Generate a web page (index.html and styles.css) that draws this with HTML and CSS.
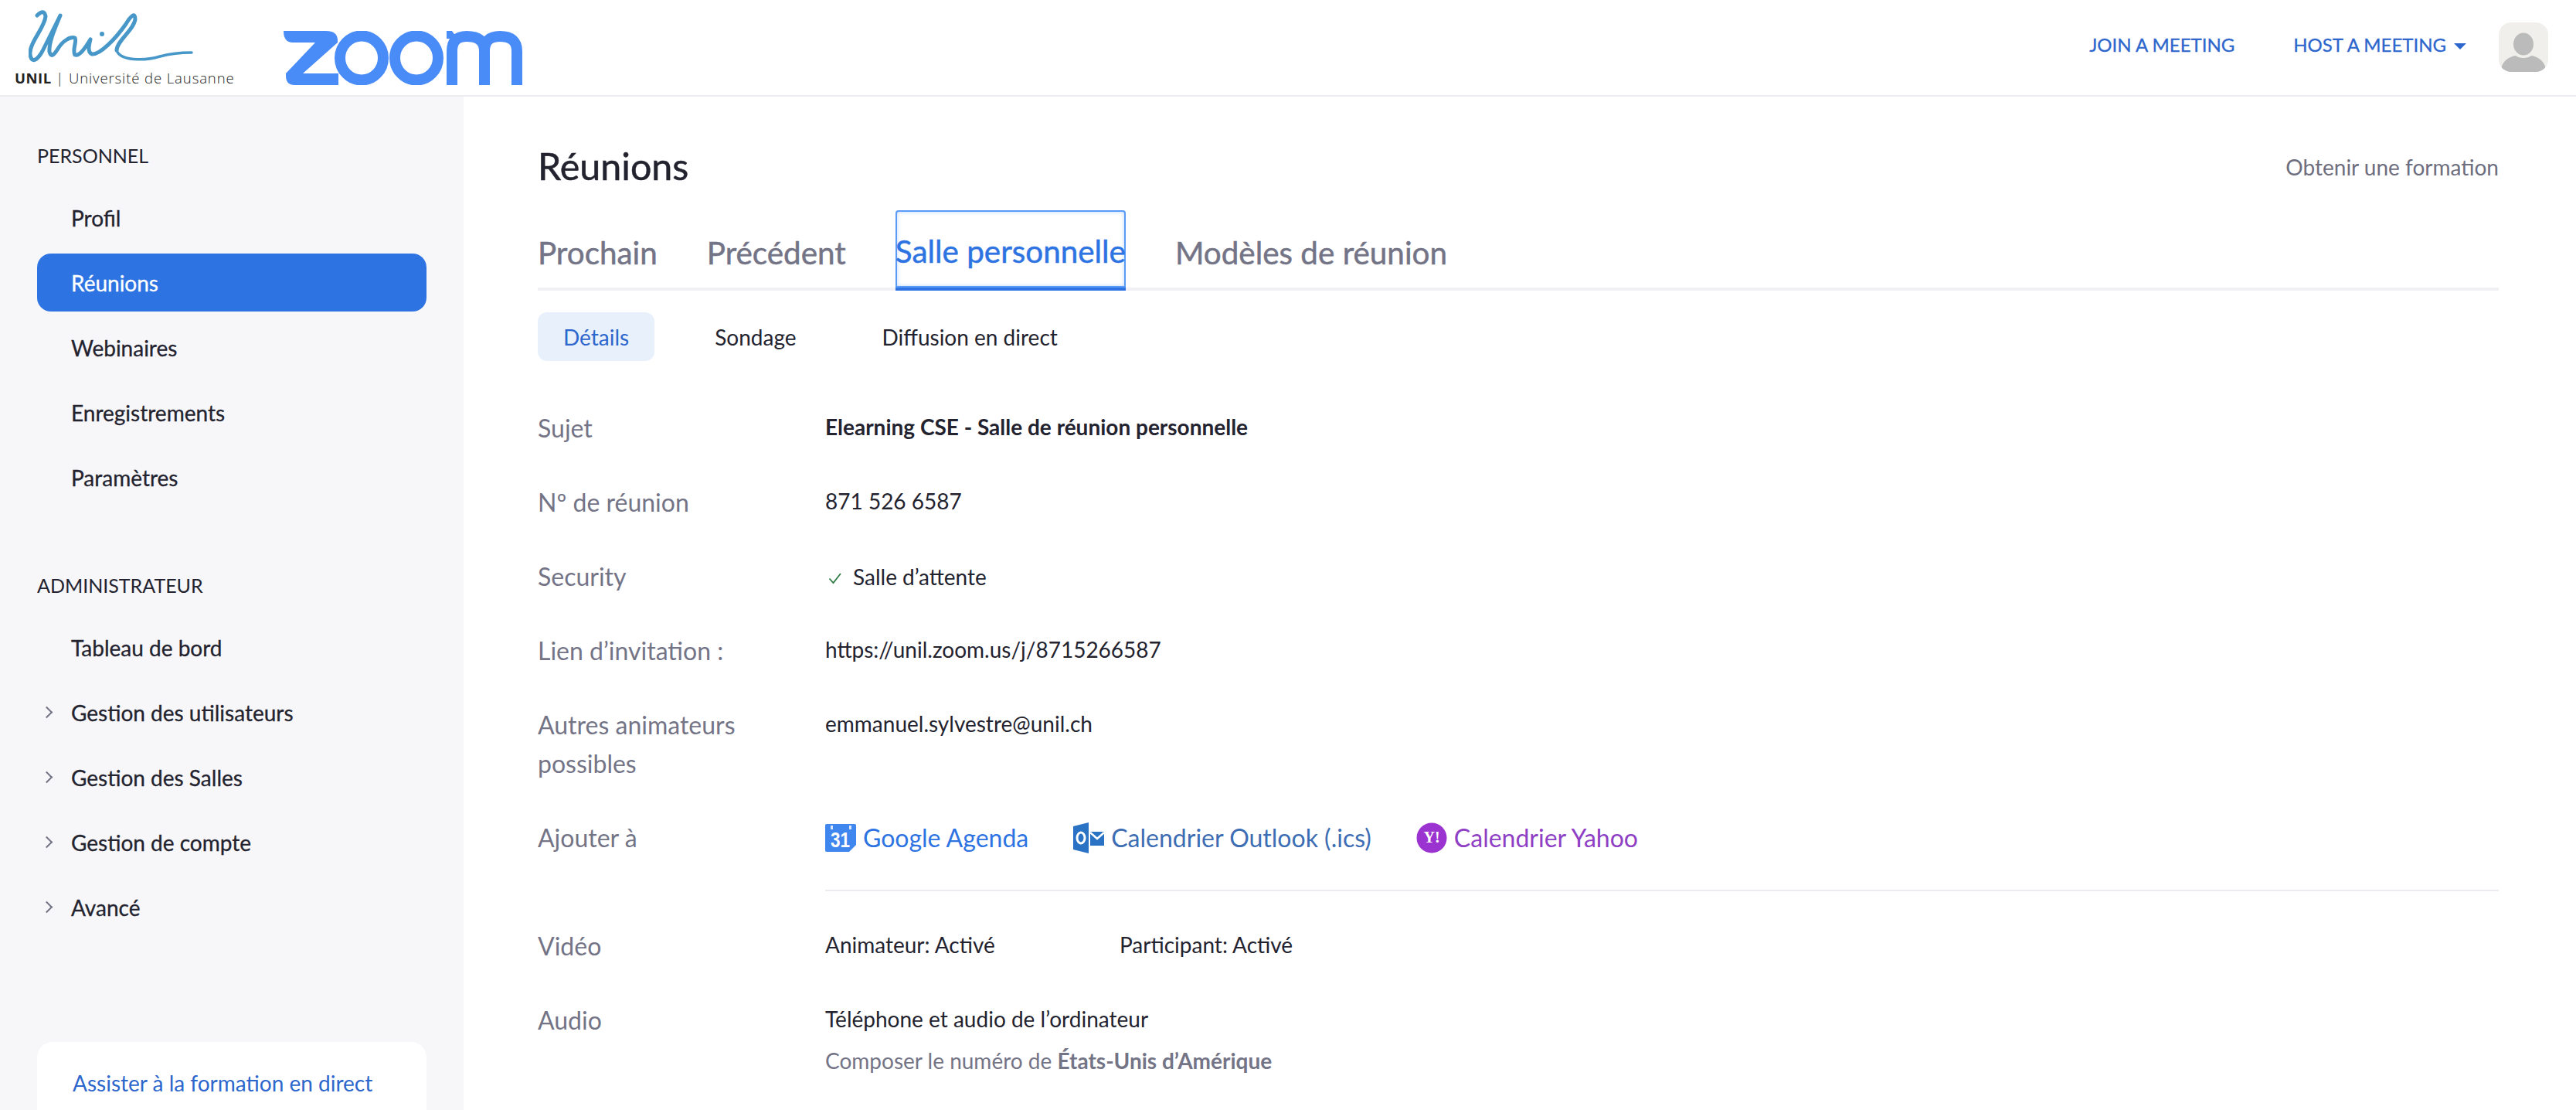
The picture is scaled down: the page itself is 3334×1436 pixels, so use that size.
FILE: index.html
```html
<!DOCTYPE html>
<html lang="fr">
<head>
<meta charset="utf-8">
<title>Réunions - Zoom</title>
<link rel="stylesheet" href="styles.css">
</head>
<body>
<header class="topbar">
  <div class="brand">
    <div class="unil">
      <svg class="unil-sign" viewBox="0 0 230 70" width="230" height="70" aria-hidden="true">
        <path class="unil-stroke" d="M11 9Q20 0 22 10C21 25 0 45 2 60C4 72 12 66 18 55L41 9C33 28 26 45 27 56C29 64 33 60 38 52C44 42 54 36 60 38C63 42 56 54 60 60C66 62 74 50 80 40C78 48 76 56 82 59C92 60 112 40 126 20C132 10 138 4 138 14C136 28 114 42 114 54"/>
        <path class="unil-tail" d="M114 54C118 68 150 68 170 62C185 58 200 57 211 57"/>
        <circle class="unil-dot" cx="95" cy="33" r="3"/>
      </svg>
      <div class="unil-text"><b>UNIL</b> | Université de Lausanne</div>
    </div>
    <svg class="zoom-logo" viewBox="0 0 309 70" width="309" height="70" aria-label="zoom">
      <path class="zoom-fill" d="M0 0H55Q69 0 70 11V15L25 55H71V70H14Q3 70 3 58V55L41 15H12Q0 15 0 0Z"/>
      <ellipse class="zoom-ring" cx="101" cy="35" rx="28" ry="28.5"/>
      <ellipse class="zoom-ring" cx="172" cy="35" rx="28" ry="28.5"/>
      <path class="zoom-ring" d="M218 70V26Q218 7 237 7Q260 7 260 26V70M260 26Q260 7 280 7Q302 7 302 26V70"/>
      <path class="zoom-fill" d="M211 0H218L225 10H211Z"/>
    </svg>
  </div>
  <nav class="topnav">
    <a class="topnav-link">JOIN A MEETING</a>
    <a class="topnav-link host">HOST A MEETING <span class="caret"></span></a>
    <div class="avatar">
      <svg viewBox="0 0 64 64" width="64" height="64" aria-hidden="true">
        <ellipse cx="32" cy="28" rx="13" ry="14.5" fill="#bbbbbb"/>
        <path d="M3 61C4 50 14 44 22 43C26 47 38 47 42 43C50 44 60 50 61 61Q60 64 56 64H8Q4 64 3 61Z" fill="#bbbbbb"/>
      </svg>
    </div>
  </nav>
</header>
<div class="layout">
  <aside class="sidebar">
    <h3 class="side-title">PERSONNEL</h3>
    <ul class="side-list">
      <li class="side-item">Profil</li>
      <li class="side-item active">Réunions</li>
      <li class="side-item">Webinaires</li>
      <li class="side-item">Enregistrements</li>
      <li class="side-item">Paramètres</li>
    </ul>
    <h3 class="side-title admin">ADMINISTRATEUR</h3>
    <ul class="side-list">
      <li class="side-item">Tableau de bord</li>
      <li class="side-item"><span class="chev"></span>Gestion des utilisateurs</li>
      <li class="side-item"><span class="chev"></span>Gestion des Salles</li>
      <li class="side-item"><span class="chev"></span>Gestion de compte</li>
      <li class="side-item"><span class="chev"></span>Avancé</li>
    </ul>
    <div class="side-card"><a class="side-card-link">Assister à la formation en direct</a></div>
  </aside>
  <main class="main">
    <div class="title-row">
      <h1 class="title">Réunions</h1>
      <a class="training">Obtenir une formation</a>
    </div>
    <div class="tabs">
      <a class="tab">Prochain</a>
      <a class="tab">Précédent</a>
      <a class="tab current">Salle personnelle</a>
      <a class="tab">Modèles de réunion</a>
    </div>
    <div class="subtabs">
      <a class="subtab on">Détails</a>
      <a class="subtab">Sondage</a>
      <a class="subtab">Diffusion en direct</a>
    </div>
    <div class="rows">
      <div class="row"><div class="label">Sujet</div><div class="value strong">Elearning CSE - Salle de réunion personnelle</div></div>
      <div class="row"><div class="label">Nº de réunion</div><div class="value">871 526 6587</div></div>
      <div class="row"><div class="label">Security</div><div class="value check-line">
        <svg class="check" viewBox="0 0 18 16" width="18" height="16" aria-hidden="true"><path d="M1.5 8.5L6.5 14L16 2"/></svg>Salle d’attente</div></div>
      <div class="row"><div class="label">Lien d’invitation :</div><div class="value">https://unil.zoom.us/j/8715266587</div></div>
      <div class="row tall"><div class="label">Autres animateurs possibles</div><div class="value">emmanuel.sylvestre@unil.ch</div></div>
      <div class="row cal-row"><div class="label">Ajouter à</div><div class="cals">
        <a class="cal google">
          <svg viewBox="0 0 40 36" width="40" height="36" aria-hidden="true"><path d="M0 2Q0 0 2 0H38Q40 0 40 2V27L31 36H2Q0 36 0 34Z" fill="#3f86ee"/><rect x="7" y="2" width="3" height="5" fill="#dbe8fb"/><rect x="31" y="2" width="3" height="5" fill="#dbe8fb"/><text x="7" y="30" textLength="25" lengthAdjust="spacingAndGlyphs" class="cal-num">31</text></svg>
          Google Agenda</a>
        <a class="cal outlook">
          <svg viewBox="0 0 40 40" width="40" height="40" aria-hidden="true"><path d="M0 5L20 0V40L0 35Z" fill="#2a72c4"/><ellipse cx="10" cy="20" rx="5" ry="7" fill="none" stroke="#fff" stroke-width="3"/><path d="M22 12H40V30H22Z" fill="#2a72c4"/><path d="M22 13L31 21L40 13" fill="none" stroke="#fff" stroke-width="2.5"/></svg>
          Calendrier Outlook (.ics)</a>
        <a class="cal yahoo">
          <svg viewBox="0 0 40 40" width="40" height="40" aria-hidden="true"><circle cx="20" cy="20" r="19.5" fill="#9a33cf"/><text x="20" y="26" text-anchor="middle" class="cal-y">Y!</text></svg>
          Calendrier Yahoo</a>
      </div></div>
      <hr class="rule">
      <div class="row"><div class="label">Vidéo</div><div class="value pair"><span class="pair-a">Animateur: Activé</span><span>Participant: Activé</span></div></div>
      <div class="row audio"><div class="label">Audio</div><div class="value"><div>Téléphone et audio de l’ordinateur</div><div class="dial">Composer le numéro de <b>États-Unis d’Amérique</b></div></div></div>
    </div>
  </main>
</div>
</body>
</html>
```

FILE: styles.css
```css
* { box-sizing: border-box; }
html, body { margin: 0; height: 100%; overflow: hidden; background: #fff; }
body { font-family: Lato, "Open Sans", sans-serif; color: #23232f; font-size: 28px; }

.topbar { height: 125px; display: flex; justify-content: space-between; align-items: flex-start; border-bottom: 2px solid #ececf0; background: #fff; padding-right: 36px; }
.brand { display: flex; align-items: flex-start; }
.unil { width: 367px; padding-top: 11px; padding-left: 19px; display: flex; flex-direction: column; }
.unil-sign { margin-left: 18px; display: block; }
.unil-stroke { fill: none; stroke: #4798c8; stroke-width: 5; stroke-linecap: round; stroke-linejoin: round; }
.unil-tail { fill: none; stroke: #4798c8; stroke-width: 3.5; stroke-linecap: round; }
.unil-dot { fill: #4798c8; }
.unil-text { font-family: "Open Sans", sans-serif; font-weight: 300; font-size: 18.5px; line-height: 24px; letter-spacing: .9px; color: #222; margin-top: 8px; white-space: nowrap; }
.unil-text b { font-weight: 700; letter-spacing: .5px; }
.zoom-logo { margin-top: 40px; display: block; }
.zoom-fill { fill: #4a8cf7; }
.zoom-ring { fill: none; stroke: #4a8cf7; stroke-width: 14; }
.topnav { display: flex; align-items: center; height: 123px; margin-top: -4px; }
.topnav-link { color: #2d66cc; font-size: 24px; -webkit-text-stroke: .3px #2d66cc; display: flex; align-items: center; white-space: nowrap; }
.host { margin-left: 76px; }
.caret { display: inline-block; margin-left: 10px; margin-top: 4px; border-left: 8px solid transparent; border-right: 8px solid transparent; border-top: 8px solid #2d66cc; }
.avatar { width: 64px; height: 64px; margin-left: 42px; background: #f0efeb; border-radius: 16px; overflow: hidden; margin-top: 6px; }
.avatar svg { display: block; }

.layout { display: flex; height: 1311px; }
.sidebar { width: 600px; flex: none; background: #f7f7fa; padding: 61px 48px 0; overflow: hidden; }
.side-title { margin: 0 0 28px; font-size: 25px; font-weight: 400; line-height: 30px; color: #23232f; }
.side-title.admin { margin-top: 87px; }
.side-list { list-style: none; margin: 0; padding: 0; }
.side-item { height: 75px; margin-bottom: 9px; padding-left: 44px; border-radius: 18px; display: flex; align-items: center; font-size: 28px; -webkit-text-stroke: .3px currentColor; position: relative; white-space: nowrap; }
.side-item.active { background: #2e73e2; color: #fff; }
.chev { position: absolute; left: 7px; top: 32px; width: 11px; height: 11px; border-top: 2px solid #747487; border-right: 2px solid #747487; transform: rotate(45deg); }
.side-card { margin-top: 137px; background: #fff; border-radius: 20px 20px 0 0; height: 140px; padding: 36px 46px; }
.side-card-link { color: #2d66cc; font-size: 28px; white-space: nowrap; }

.main { flex: 1; min-width: 0; padding: 56px 100px 0 96px; }
.title-row { display: flex; justify-content: space-between; align-items: center; height: 66px; }
.title { margin: 0; font-size: 48.4px; font-weight: 400; -webkit-text-stroke: .5px #23232f; color: #23232f; }
.training { color: #6e6e7e; font-size: 28px; margin-top: 4px; }
.tabs { display: flex; gap: 64px; height: 104px; margin-top: 25px; border-bottom: 4px solid #f0f0f5; }
.tab { height: 104px; padding-top: 4px; display: flex; align-items: center; font-size: 40.4px; color: #747487; -webkit-text-stroke: .5px currentColor; white-space: nowrap; }
.tab.current { color: #2e73e2; border-radius: 4px 4px 0 0; border-bottom: 4px solid #2e73e2; box-shadow: inset 0 0 0 2px #5b9bf8, inset 0 0 4px 3px #cfe1fd; }
.subtabs { display: flex; margin-top: 28px; height: 63px; }
.subtab { padding: 0 33px; display: flex; align-items: center; font-size: 28px; border-radius: 12px; margin-right: 45px; white-space: nowrap; }
.subtab.on { background: #e8f0fb; color: #2d66cc; }
.rows { margin-top: 62px; }
.row { display: flex; min-height: 96px; line-height: 50px; }
.label { width: 372px; flex: none; color: #747487; font-size: 32px; }
.value { font-size: 28px; line-height: 46px; }
.strong { font-weight: 700; }
.check-line { display: flex; align-items: center; height: 46px; margin-top: 2px; padding-left: 4px; }
.check { fill: none; stroke: #2f7d45; stroke-width: 1.8; margin-right: 14px; margin-top: 4px; }
.tall { min-height: 146px; }
.cal-row { min-height: 92px; }
.cals { display: flex; gap: 58px; }
.cal { display: flex; align-items: center; gap: 9px; font-size: 32px; height: 50px; white-space: nowrap; }
.google { color: #2e73e2; }
.outlook { color: #3d6db3; }
.yahoo { color: #8f3fc4; }
.cal-num { fill: #fff; font-family: "Liberation Sans", sans-serif; font-weight: 700; font-size: 27px; }
.cal-y { fill: #fff; font-family: "Liberation Serif", serif; font-weight: 700; font-size: 20px; }
.rule { border: 0; height: 2px; background: #ebebf2; margin: 0 0 46px 372px; }
.pair { display: flex; }
.pair-a { width: 381px; }
.dial { color: #747487; margin-top: 8px; }
.dial b { font-weight: 700; }
```
